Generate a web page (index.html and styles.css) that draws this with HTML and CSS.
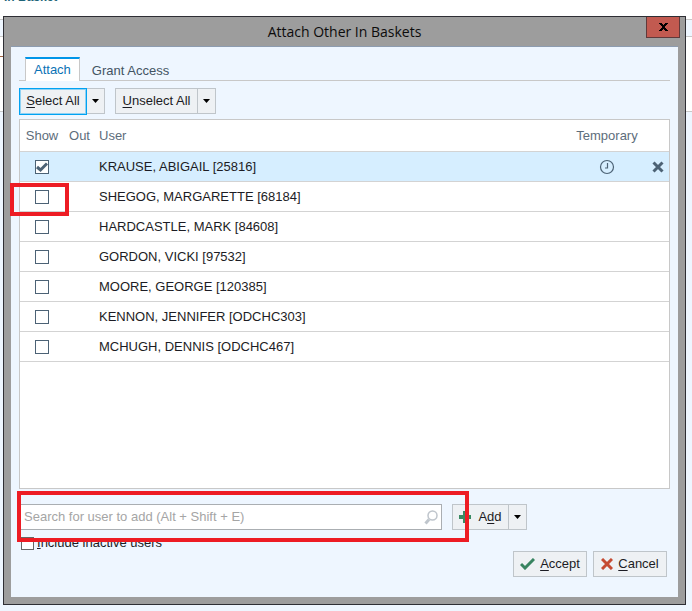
FILE: index.html
```html
<!DOCTYPE html>
<html lang="en">
<head>
<meta charset="utf-8">
<title>Attach Other In Baskets</title>
<link rel="stylesheet" href="styles.css">
</head>
<body>
<div class="backdrop">
  <div class="backdrop-title"><span>In Basket</span></div>
  <div class="backdrop-toolbar"></div>
  <div class="backdrop-page"><span class="backdrop-mark"></span></div>
  <div class="backdrop-body"></div>
</div>
<div class="dialog" role="dialog" aria-labelledby="dialog-title">
  <header class="titlebar">
    <h1 id="dialog-title">Attach Other In Baskets</h1>
    <button class="close" type="button" aria-label="Close">
      <svg width="9" height="8" viewBox="0 0 9 8"><path d="M0 0h3v1h1v1h1V1h1V0h3v1H8v1H7v1H6v2h1v1h1v1h1v1H6V7H5V6H4v1H3v1H0V7h1V6h1V5h1V3H2V2H1V1H0z"/></svg>
    </button>
  </header>
  <main class="panel">
    <nav class="tabs">
      <a class="tab active" href="#attach">Attach</a>
      <a class="tab" href="#grant">Grant Access</a>
    </nav>
    <div class="tools">
      <div class="split focused">
        <button class="btn" type="button"><span><u>S</u>elect All</span></button>
        <button class="btn arrow" type="button" aria-label="Select options"><svg width="7" height="4" viewBox="0 0 7 4"><path d="M0 0h7L3.500 4z"/></svg></button>
      </div>
      <div class="split">
        <button class="btn" type="button"><span><u>U</u>nselect All</span></button>
        <button class="btn arrow" type="button" aria-label="Unselect options"><svg width="7" height="4" viewBox="0 0 7 4"><path d="M0 0h7L3.500 4z"/></svg></button>
      </div>
    </div>
    <div class="list">
      <table>
        <colgroup><col class="c-show"><col class="c-out"><col><col class="c-temp"><col class="c-del"></colgroup>
        <thead><tr><th class="mid">Show</th><th class="mid">Out</th><th>User</th><th class="mid">Temporary</th><th></th></tr></thead>
        <tbody>
          <tr class="selected"><td class="mid"><input type="checkbox" aria-label="Show KRAUSE, ABIGAIL" checked></td><td></td><td>KRAUSE, ABIGAIL [25816]</td>
            <td class="mid"><svg class="clock" width="16" height="16" viewBox="0 0 16 16"><circle cx="8" cy="8" r="6.500"/><path d="M8.500 4v5H6"/></svg></td>
            <td class="mid"><button class="remove" type="button" aria-label="Remove"><svg width="12" height="12" viewBox="0 0 12 12"><path d="M1.500 1.500l9 9M10.500 1.500l-9 9"/></svg></button></td></tr>
          <tr><td class="mid"><span class="marked"><input type="checkbox" aria-label="Show SHEGOG, MARGARETTE"></span></td><td></td><td>SHEGOG, MARGARETTE [68184]</td><td></td><td></td></tr>
          <tr><td class="mid"><input type="checkbox" aria-label="Show HARDCASTLE, MARK"></td><td></td><td>HARDCASTLE, MARK [84608]</td><td></td><td></td></tr>
          <tr><td class="mid"><input type="checkbox" aria-label="Show GORDON, VICKI"></td><td></td><td>GORDON, VICKI [97532]</td><td></td><td></td></tr>
          <tr><td class="mid"><input type="checkbox" aria-label="Show MOORE, GEORGE"></td><td></td><td>MOORE, GEORGE [120385]</td><td></td><td></td></tr>
          <tr><td class="mid"><input type="checkbox" aria-label="Show KENNON, JENNIFER"></td><td></td><td>KENNON, JENNIFER [ODCHC303]</td><td></td><td></td></tr>
          <tr><td class="mid"><input type="checkbox" aria-label="Show MCHUGH, DENNIS"></td><td></td><td>MCHUGH, DENNIS [ODCHC467]</td><td></td><td></td></tr>
        </tbody>
      </table>
    </div>
    <div class="add-row">
      <div class="search">
        <input type="text" aria-label="Search for user to add" placeholder="Search for user to add (Alt + Shift + E)">
        <svg width="14" height="15" viewBox="0 0 14 15"><circle cx="8.500" cy="5.500" r="4.500"/><path class="handle" d="M5 9.500l-3.500 4"/></svg>
      </div>
      <div class="split">
        <button class="btn add" type="button"><svg width="12" height="12" viewBox="0 0 12 12"><path fill="#3a8a63" d="M4 0h4v4h4v4H8v4H4V8H0V4h4z"/></svg><span>A<u>d</u>d</span></button>
        <button class="btn arrow" type="button" aria-label="Add options"><svg width="7" height="4" viewBox="0 0 7 4"><path d="M0 0h7L3.500 4z"/></svg></button>
      </div>
    </div>
    <label class="inactive"><input type="checkbox"><span><u>I</u>nclude inactive users</span></label>
    <footer class="actions">
      <button class="btn" type="button"><svg width="15" height="12" viewBox="0 0 15 12"><path d="M1 6l4 4 9-9" fill="none" stroke="#388460" stroke-width="3"/></svg><span><u>A</u>ccept</span></button>
      <button class="btn" type="button"><svg width="12" height="12" viewBox="0 0 12 12"><path d="M1 1l10 10M11 1L1 11" fill="none" stroke="#c54b32" stroke-width="3"/></svg><span><u>C</u>ancel</span></button>
    </footer>
  </main>
</div>
</body>
</html>
```
FILE: styles.css
```css
*, *::after { box-sizing: border-box; }
body {
  margin: 0;
  min-height: 100vh;
  display: grid;
  font: 13px/16px "Liberation Sans", Arial, sans-serif;
  color: #1c1c24;
}
.backdrop, .dialog { grid-area: 1 / 1; }
.backdrop { display: flex; flex-direction: column; }
.backdrop-title {
  display: flex;
  align-items: flex-start;
  height: 19px;
  padding-left: 4px;
  font-size: 12px;
  font-weight: bold;
  color: #1e6478;
}
.backdrop-title span { margin-top: -11px; }
.backdrop-toolbar {
  height: 18px;
  background: #eef6ff;
  border: solid #c8c8c8;
  border-width: 1px 0;
}
.backdrop-page { height: 74px; padding-top: 19px; }
.backdrop-mark { display: block; width: 3px; height: 1px; background: #a06040; }
.backdrop-body { flex: 1; background: #eef6ff; border-top: 1px solid #c8c8c8; }

.dialog {
  display: flex;
  flex-direction: column;
  z-index: 1;
  margin: 16px 6px 6px 3px;
  padding: 0 7px 7px;
  border: 1px solid #2e2e34;
  background: #9d9d9d;
}
.titlebar {
  position: relative;
  height: 29px;
  text-align: center;
}
h1 {
  margin: 0;
  font: 14px/30px "Open Sans", sans-serif;
  color: #0c0c0c;
}
.close {
  position: absolute;
  top: 0;
  right: -2px;
  width: 34px;
  height: 21px;
  padding: 0;
  border: 1px solid #61393a;
  border-top: 0;
  background: #c25a50;
  display: grid;
  place-items: center;
}
.panel {
  flex: 1;
  display: flex;
  flex-direction: column;
  padding: 10px 8px 20px;
  background: #eef6ff;
  border-top: 1px solid #8d9cb0;
}
.tabs {
  display: flex;
  height: 24px;
  padding-left: 6px;
  border-bottom: 1px solid #c8c8c8;
}
.tab {
  padding: 6px 12px 0;
  color: #435463;
  text-decoration: none;
}
.tab.active {
  height: 24px;
  padding: 3px 8px 0;
  border: 1px solid #c8c8c8;
  border-top: 2px solid #0095e8;
  border-bottom: 0;
  background: #fff;
  color: #0b72b5;
}
.tools { display: flex; gap: 10px; height: 26px; margin-top: 7px; }
.split { display: flex; }
.btn {
  display: flex;
  align-items: center;
  justify-content: center;
  gap: 5px;
  height: 26px;
  padding: 0 6px;
  border: 1px solid #bfc5ca;
  background: #eef1f4;
  font: inherit;
  color: inherit;
}
.btn u { text-underline-offset: 2px; }
.split .arrow { width: 19px; padding: 0; margin-left: -1px; }
.tools .btn:first-child { width: 83px; }
.tools .focused .btn:first-child {
  z-index: 1;
  width: 68px;
  height: 27px;
  padding-bottom: 1px;
  border-color: #00a2f2;
  outline: 1px solid #00a2f266;
  outline-offset: -2px;
}
.list {
  flex: 1;
  margin-top: 5px;
  border: 1px solid #c8c8c8;
  background: #fff;
}
table { width: 100%; table-layout: fixed; border-collapse: separate; border-spacing: 0; }
.c-show { width: 44px; }
.c-out { width: 31px; }
.c-temp { width: 80px; }
.c-del { width: 22px; }
th, td { height: 30px; padding: 1px 0 0 4px; border-bottom: 1px solid #d3d3d3; text-align: left; white-space: nowrap; }
th { height: 32px; padding-top: 0; font-weight: normal; color: #5d6d7b; }
.mid { padding: 0; text-align: center; }
.selected td { background: #d6eeff; }
td svg, td input { display: block; }
td > svg, td > input[type="checkbox"] { margin: 0 auto; }
input[type="checkbox"] {
  appearance: none;
  width: 14px;
  height: 14px;
  margin: 0;
  border: 1px solid #4c6275;
  background: #fff;
}
input[type="checkbox"]:checked {
  background: #fff url("data:image/svg+xml,%3Csvg xmlns='http://www.w3.org/2000/svg' viewBox='0 0 12 12'%3E%3Cpath d='M1 6l3.500 3L11 2.500' fill='none' stroke='%234c6275' stroke-width='3'/%3E%3C/svg%3E");
}
.clock { fill: none; stroke: #4c6275; stroke-width: 1.2; }
.remove { display: block; margin: 0 auto; padding: 0; border: 0; background: none; }
.remove path { stroke: #4c6275; stroke-width: 3; }
.marked { position: relative; display: block; width: 14px; margin: 0 auto; }
.marked::after {
  content: "";
  position: absolute;
  left: -25px;
  top: -7px;
  width: 59px;
  height: 33px;
  border: 4px solid #ed1c24;
}
.add-row { position: relative; display: flex; gap: 10px; margin-top: 15px; }
.add-row::after {
  content: "";
  position: absolute;
  left: -2px;
  top: -13px;
  width: 452px;
  height: 51px;
  border: 4px solid #ed1c24;
}
.search {
  display: flex;
  align-items: center;
  width: 423px;
  height: 26px;
  padding: 0 3px 0 4px;
  border: 1px solid #aaaeb2;
  background: #fff;
}
.search input { flex: 1; min-width: 0; padding: 0; border: 0; outline: 0; background: none; font: inherit; }
.search input::placeholder { color: #a5a5a5; opacity: 1; }
.search svg { fill: none; stroke: #bfc5cc; stroke-width: 1.5; }
.search .handle { stroke-width: 3; }
.add { width: 57px; gap: 7px; }
.inactive { display: flex; align-items: center; gap: 3px; margin: 5px 0 0 2px; }
.inactive input[type="checkbox"] { width: 13px; height: 13px; border-color: #666; }
.actions { display: flex; justify-content: flex-end; gap: 6px; padding-right: 3px; }
.actions .btn { width: 74px; }
```
